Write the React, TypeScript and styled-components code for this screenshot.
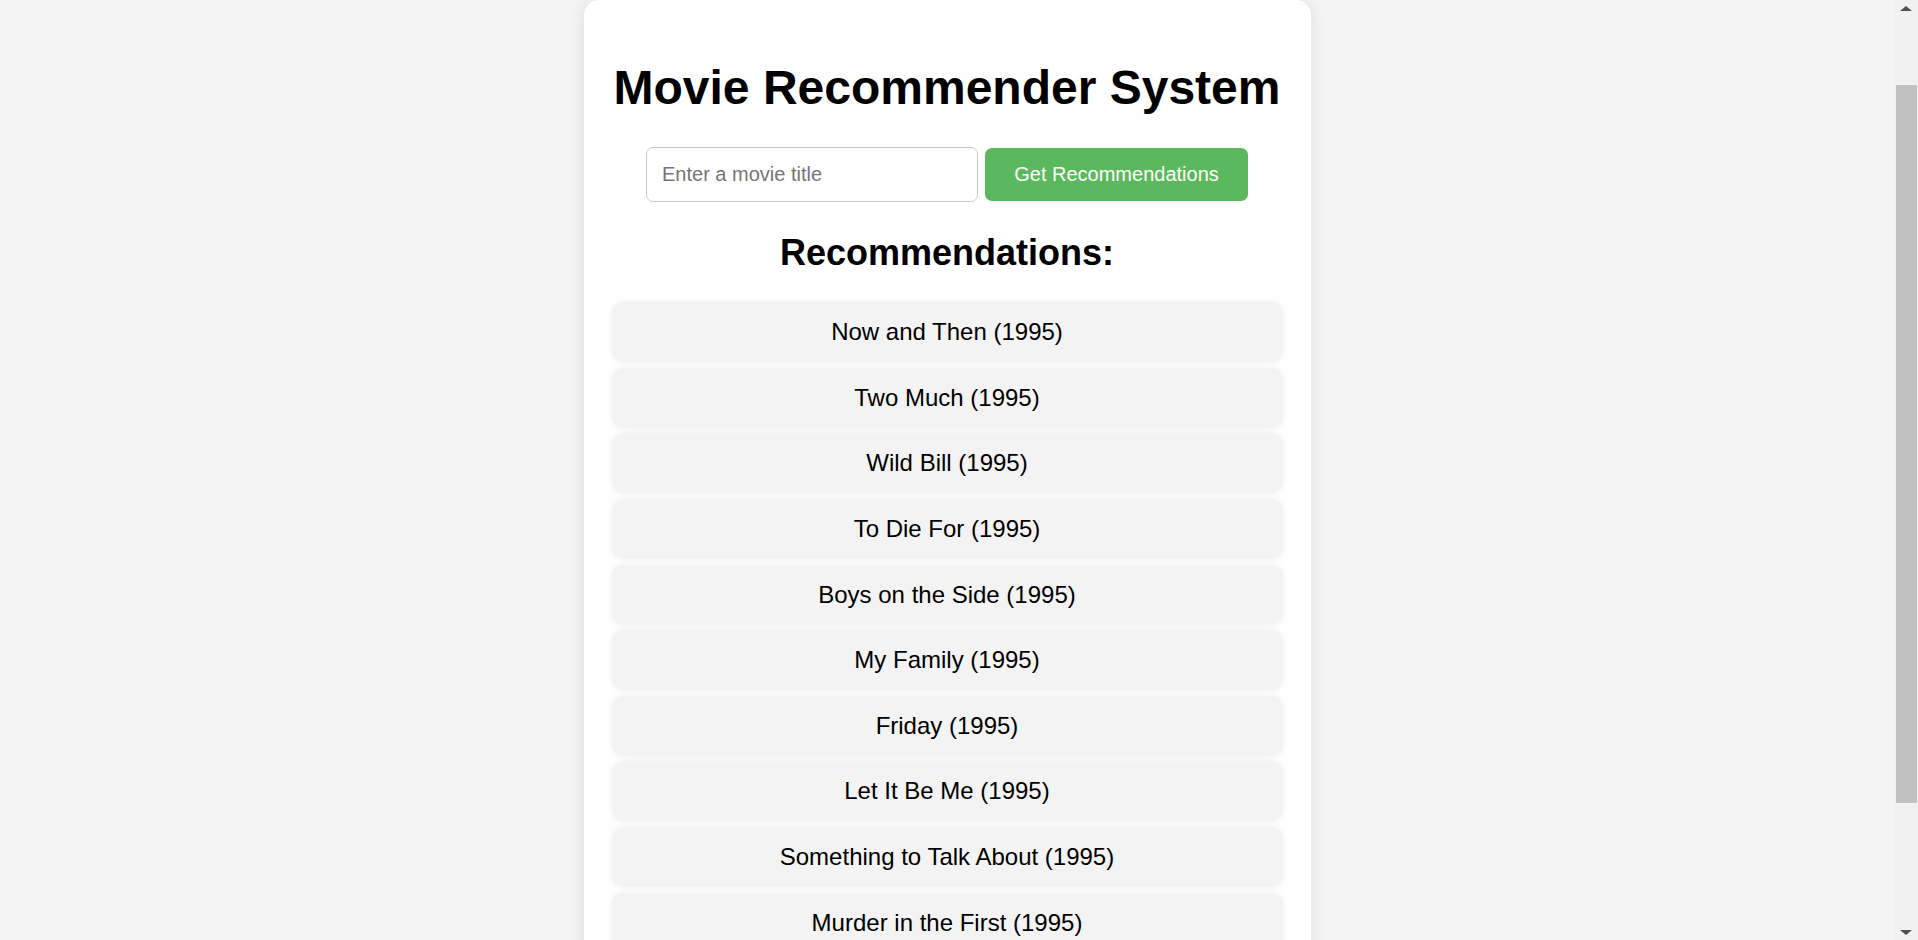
import React, { useEffect } from "react";
import styled, { createGlobalStyle } from "styled-components";

const GlobalStyle = createGlobalStyle`
  html, body {
    margin: 0;
    padding: 0;
    background: #f4f4f4;
    font-family: "Liberation Sans", Arial, sans-serif;
  }
`;

const Page = styled.div`
  padding: 89px 24px 114px 0;
`;

const Card = styled.div`
  box-sizing: border-box;
  width: 727px;
  margin: 0 auto;
  padding: 28px 28px 30px;
  background: #ffffff;
  border-radius: 15px;
  box-shadow: 0 0 15px rgba(0, 0, 0, 0.1);
  text-align: center;
`;

const Title = styled.h1`
  margin: 32px 0;
  font-size: 48px;
  font-weight: bold;
  color: #000;
`;

const Form = styled.form`
  display: flex;
  justify-content: center;
  align-items: center;
  gap: 7px;
`;

const Input = styled.input`
  box-sizing: border-box;
  width: 332px;
  height: 55px;
  padding: 0 15px;
  font-family: "Liberation Sans", Arial, sans-serif;
  font-size: 20px;
  color: #000;
  border: 1px solid #c8c8c8;
  border-radius: 7px;
  outline: none;
  &::placeholder {
    color: #757575;
  }
`;

const Button = styled.button`
  box-sizing: border-box;
  width: 263px;
  height: 53px;
  font-family: "Liberation Sans", Arial, sans-serif;
  font-size: 20px;
  color: #fff;
  background: #5cb85c;
  border: none;
  border-radius: 7px;
  cursor: pointer;
`;

const Subtitle = styled.h2`
  margin: 30px 0 28px;
  font-size: 36px;
  font-weight: bold;
  color: #000;
`;

const List = styled.ul`
  list-style: none;
  margin: 0;
  padding: 0;
  display: flex;
  flex-direction: column;
  gap: 5.65px;
`;

const Item = styled.li`
  height: 60px;
  display: flex;
  align-items: center;
  justify-content: center;
  background: #f3f3f3;
  border-radius: 12px;
  box-shadow: 0 0 6px rgba(0, 0, 0, 0.07);
  font-size: 24px;
  color: #000;
`;

/* Window scrollbar as it appears in the reference (drawn over the page edge) */
const ScrollTrack = styled.div`
  position: fixed;
  top: 0;
  right: 0;
  width: 24px;
  height: 100vh;
  background: #f1f1f1;
  display: flex;
  flex-direction: column;
  align-items: stretch;
`;

const ScrollArrow = styled.div`
  height: 17px;
  display: flex;
  align-items: center;
  justify-content: center;
  flex: none;
`;

const ScrollSpace = styled.div`
  flex: 1;
  padding: 68px 1px 120px 2px;
  display: flex;
`;

const ScrollThumb = styled.div`
  flex: 1;
  background: #c1c1c1;
`;

const movies = [
  "Now and Then (1995)",
  "Two Much (1995)",
  "Wild Bill (1995)",
  "To Die For (1995)",
  "Boys on the Side (1995)",
  "My Family (1995)",
  "Friday (1995)",
  "Let It Be Me (1995)",
  "Something to Talk About (1995)",
  "Murder in the First (1995)",
];

export default function App() {
  useEffect(() => {
    window.scrollTo(0, 89);
  }, []);
  return (
    <>
      <GlobalStyle />
      <Page>
        <Card>
          <Title>Movie Recommender System</Title>
          <Form onSubmit={(e) => e.preventDefault()}>
            <Input type="text" placeholder="Enter a movie title" />
            <Button type="submit">Get Recommendations</Button>
          </Form>
          <Subtitle>Recommendations:</Subtitle>
          <List>
            {movies.map((m) => (
              <Item key={m}>{m}</Item>
            ))}
          </List>
        </Card>
      </Page>
      <ScrollTrack>
        <ScrollArrow>
          <svg width="12" height="6" viewBox="0 0 12 6">
            <polygon points="6,0 12,5 0,5" fill="#505050" />
          </svg>
        </ScrollArrow>
        <ScrollSpace>
          <ScrollThumb />
        </ScrollSpace>
        <ScrollArrow>
          <svg width="12" height="6" viewBox="0 0 12 6">
            <polygon points="0,1 12,1 6,6" fill="#505050" />
          </svg>
        </ScrollArrow>
      </ScrollTrack>
    </>
  );
}
